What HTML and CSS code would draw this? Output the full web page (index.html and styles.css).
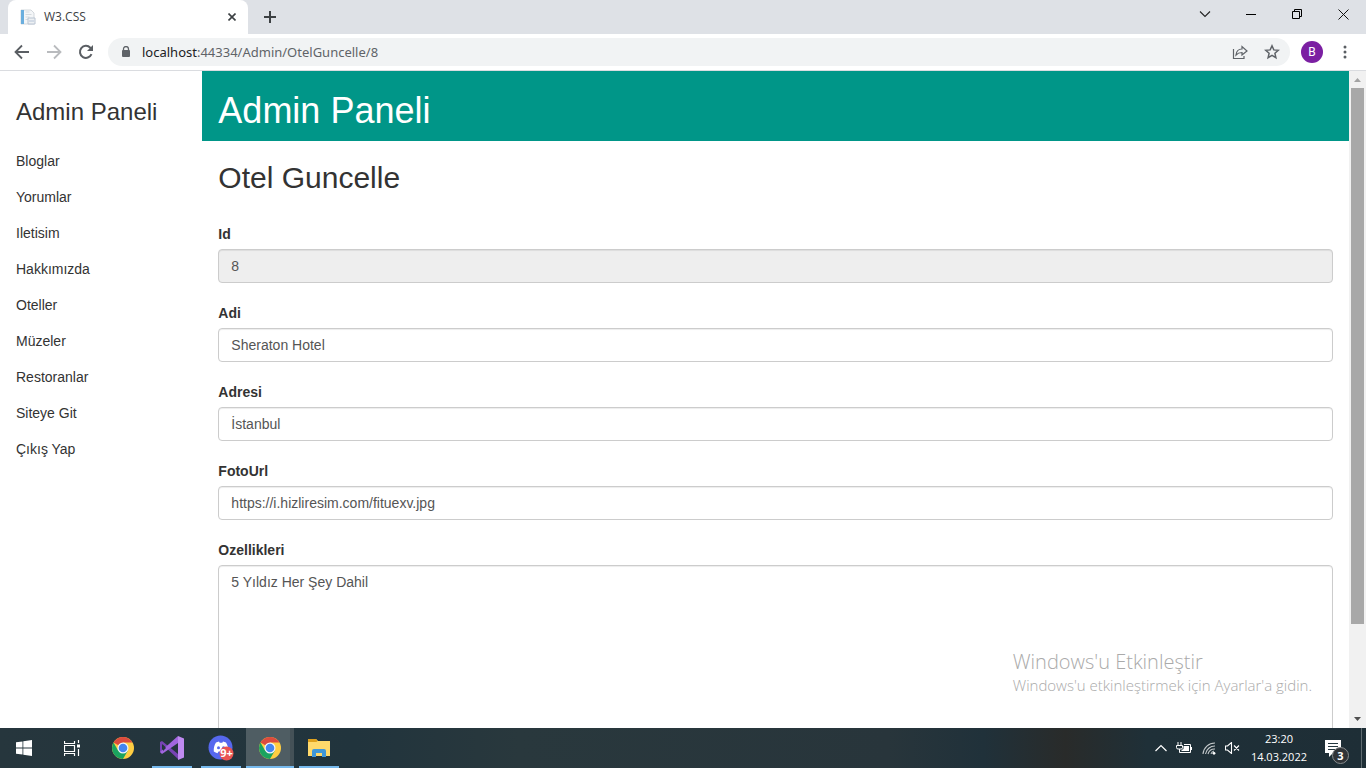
FILE: index.html
```html
<!DOCTYPE html>
<html lang="tr">
<head>
<meta charset="utf-8">
<title>W3.CSS</title>
<link rel="stylesheet" href="styles.css">
</head>
<body>
<header class="tabstrip">
  <div class="tab">
    <svg class="favicon" width="16" height="16" viewBox="0 0 16 16"><path d="M1 1h10l3 3v11H1z" fill="#f4f6f8" stroke="#d3d8dd"/><path d="M1 1h3v14H1z" fill="#6aaede"/><path d="M5.500 3h4M5.500 5.500h6M5.500 8h4M5.500 10.500h3" stroke="#d5dade"/><path d="M8 9h7v6H8z" fill="#edf0f3" stroke="#b9c4d2"/><path d="M9 12h5" stroke="#b6c4d8"/></svg>
    <span class="tab-title">W3.CSS</span>
    <button class="icon-button tab-close" aria-label="Close tab"><svg width="8" height="8" viewBox="0 0 8 8"><path d="M.5.5l7 7M7.500.5l-7 7" stroke="#3c4043" stroke-width="1.600"/></svg></button>
  </div>
  <button class="icon-button new-tab" aria-label="New tab"><svg width="12" height="12" viewBox="0 0 12 12"><path d="M6 0v12M0 6h12" stroke="#3c4043" stroke-width="2"/></svg></button>
  <div class="window-buttons">
    <button class="icon-button" aria-label="Search tabs"><svg width="12" height="12" viewBox="0 0 12 12"><path d="M1 3.500l5 5 5-5" fill="none" stroke="#222" stroke-width="1.100"/></svg></button>
    <button class="icon-button" aria-label="Minimize"><svg width="10" height="10" viewBox="0 0 10 10"><path d="M0 5.500h10" stroke="#000"/></svg></button>
    <button class="icon-button" aria-label="Restore"><svg width="10" height="10" viewBox="0 0 10 10"><path d="M.5 2.500h7v7h-7zM2.500 2.500v-2h7v7h-2" fill="none" stroke="#000"/></svg></button>
    <button class="icon-button" aria-label="Close"><svg width="11" height="11" viewBox="0 0 11 11"><path d="M.5.5l10 10M10.500.5l-10 10" stroke="#111"/></svg></button>
  </div>
</header>
<div class="toolbar">
  <div class="nav-buttons">
    <button class="icon-button" aria-label="Back"><svg width="16" height="16" viewBox="0 0 16 16"><path d="M15 8H2M8 1.500L1.500 8 8 14.500" fill="none" stroke="#5a5e63" stroke-width="1.800"/></svg></button>
    <button class="icon-button" aria-label="Forward"><svg width="16" height="16" viewBox="0 0 16 16"><path d="M1 8h13M8 1.500L14.500 8 8 14.500" fill="none" stroke="#b9bbbe" stroke-width="1.800"/></svg></button>
    <button class="icon-button" aria-label="Reload"><svg width="16" height="16" viewBox="0 0 16 16"><path d="M13.500 10.200A6 6 0 1 1 12.300 3.700L14 5.500" fill="none" stroke="#5a5e63" stroke-width="2"/><path d="M15 1v6H9z" fill="#5a5e63"/></svg></button>
  </div>
  <div class="address">
    <svg width="10" height="12" viewBox="0 0 10 12"><path d="M2.500 5V3a2.500 2.500 0 0 1 5 0v2" fill="none" stroke="#5f6368" stroke-width="1.300"/><rect x="1" y="4" width="8" height="7" rx="1" fill="#5f6368"/></svg>
    <a class="url" href="#"><span class="host">localhost</span>:44334/Admin/OtelGuncelle/8</a>
    <button class="icon-button" aria-label="Share"><svg width="16" height="16" viewBox="0 0 16 16"><path d="M1.500 5v9.500h10.500V12" fill="none" stroke="#5f6368" stroke-width="1.200"/><path d="M4 11c.4-4 2.600-6 6-6V2.500L15 7l-5 4V8.500c-3 0-4.500.8-6 2.500z" fill="none" stroke="#5f6368" stroke-width="1.200"/></svg></button>
    <button class="icon-button" aria-label="Bookmark"><svg width="16" height="16" viewBox="0 0 16 16"><path d="M8 1.800l1.800 4.100 4.500.4-3.400 3 1 4.400L8 11.400l-3.900 2.300 1-4.400-3.400-3 4.500-.4z" fill="none" stroke="#5f6368" stroke-width="1.500"/></svg></button>
  </div>
  <button class="avatar">B</button>
  <button class="icon-button" aria-label="Menu"><svg width="4" height="14" viewBox="0 0 4 14"><circle cx="2" cy="2" r="1.500" fill="#5a5e63"/><circle cx="2" cy="7" r="1.500" fill="#5a5e63"/><circle cx="2" cy="12" r="1.500" fill="#5a5e63"/></svg></button>
</div>

<div class="viewport">
  <div class="page">
    <nav class="sidebar">
      <h3 class="sidebar-title">Admin Paneli</h3>
      <a class="sidebar-link" href="#">Bloglar</a>
      <a class="sidebar-link" href="#">Yorumlar</a>
      <a class="sidebar-link" href="#">Iletisim</a>
      <a class="sidebar-link" href="#">Hakkımızda</a>
      <a class="sidebar-link" href="#">Oteller</a>
      <a class="sidebar-link" href="#">Müzeler</a>
      <a class="sidebar-link" href="#">Restoranlar</a>
      <a class="sidebar-link" href="#">Siteye Git</a>
      <a class="sidebar-link" href="#">Çıkış Yap</a>
    </nav>
    <main class="main">
      <div class="banner"><h1 class="banner-title">Admin Paneli</h1></div>
      <form class="form">
        <h2 class="form-title">Otel Guncelle</h2>
        <div class="field"><label for="id">Id</label><input class="control" id="id" value="8" readonly></div>
        <div class="field"><label for="adi">Adi</label><input class="control" id="adi" value="Sheraton Hotel"></div>
        <div class="field"><label for="adresi">Adresi</label><input class="control" id="adresi" value="İstanbul"></div>
        <div class="field"><label for="foto">FotoUrl</label><input class="control" id="foto" value="https://i.hizliresim.com/fituexv.jpg"></div>
        <div class="field"><label for="ozellik">Ozellikleri</label><textarea class="control" id="ozellik" rows="10" spellcheck="false">5 Yıldız Her Şey Dahil</textarea></div>
      </form>
    </main>
  </div>
  <div class="scrollbar">
    <svg width="17" height="17" viewBox="0 0 17 17"><path d="M5 11l3.500-4 3.500 4z" fill="#a3a3a3"/></svg>
    <div class="track"><div class="thumb"></div></div>
    <svg width="17" height="17" viewBox="0 0 17 17"><path d="M5 6l3.500 4L12 6z" fill="#505050"/></svg>
  </div>
  <div class="watermark">
    <div class="watermark-title">Windows'u Etkinleştir</div>
    <div class="watermark-text">Windows'u etkinleştirmek için Ayarlar'a gidin.</div>
  </div>
</div>

<footer class="taskbar">
  <button class="task" aria-label="Start"><svg width="16" height="16" viewBox="0 0 16 16"><path d="M0 2.300l6.500-.9v6.100H0zM7.300 1.300L16 0v7.500H7.300zM0 8.400h6.500v6.100L0 13.700zM7.300 8.400H16V16l-8.700-1.300z" fill="#fff"/></svg></button>
  <button class="task" aria-label="Task view"><svg width="16" height="16" viewBox="0 0 16 16"><path d="M.5 1v2.500h10V1M.5 5.500h10v6H.5zM.5 16v-2.500h10V16M14.500 0v3M14.500 9v7" fill="none" stroke="#fff" stroke-width="1.200"/><path d="M13 4.500h3v3h-3z" fill="#fff"/></svg></button>
  <button class="task chrome-gap" aria-label="Chrome"><svg width="24" height="24" viewBox="0 0 24 24"><circle cx="12" cy="12" r="11" fill="#ffcd42"/><path d="M12 12L2.500 6.500A11 11 0 0 1 21.500 6.500H12z" fill="#dc4b3e"/><path d="M12 12l4.800 2.800L12 23A11 11 0 0 1 2.500 6.500l4.700 8.300z" fill="#1aa35f"/><circle cx="12" cy="12" r="5.500" fill="#f3f6f9"/><circle cx="12" cy="12" r="4.300" fill="#4585f0"/></svg></button>
  <button class="task running" aria-label="Visual Studio"><svg width="24" height="24" viewBox="0 0 24 24"><path d="M0 6l2-1 16 13v5L2 8v9l-2-1z" fill="#7743b5"/><path d="M0 16l18-16v7L2 18z" fill="#a166df"/><path d="M18 0l6 2.500v19L18 24z" fill="#bf8af1"/><path d="M3 9v6l3-3z" fill="#253840"/></svg></button>
  <button class="task running" aria-label="Discord"><svg width="26" height="26" viewBox="0 0 26 26"><circle cx="12.500" cy="12.500" r="12" fill="#5668ee"/><path d="M8 7.500l3-1 .7 1.300h2.600l.7-1.300 3 1c1.800 3 2.500 6 2.200 9-1.200 1-2.500 1.500-3.700 1.700l-1-1.700h-5l-1 1.700c-1.300-.3-2.500-.8-3.700-1.700-.3-3.500.5-6.500 2.200-9z" fill="#fff"/><circle cx="10.500" cy="12.800" r="1.500" fill="#5668ee"/><circle cx="15.500" cy="12.800" r="1.500" fill="#5668ee"/><circle cx="18.500" cy="18.500" r="7" fill="#e95353"/><text class="badge-text" x="18.500" y="22" text-anchor="middle">9+</text></svg></button>
  <button class="task running active" aria-label="Chrome window"><svg width="24" height="24" viewBox="0 0 24 24"><circle cx="12" cy="12" r="11" fill="#ffcd42"/><path d="M12 12L2.500 6.500A11 11 0 0 1 21.500 6.500H12z" fill="#dc4b3e"/><path d="M12 12l4.800 2.800L12 23A11 11 0 0 1 2.500 6.500l4.700 8.300z" fill="#1aa35f"/><circle cx="12" cy="12" r="5.500" fill="#f3f6f9"/><circle cx="12" cy="12" r="4.300" fill="#4585f0"/></svg></button>
  <button class="task running" aria-label="File Explorer"><svg width="22" height="18" viewBox="0 0 22 18"><path d="M0 1q0-1 1-1h7l2 2h12v15H0z" fill="#ffd96b"/><path d="M0 1q0-1 1-1h7l1.500 2-1 1H0z" fill="#dfa11c"/><path d="M4 18v-6q0-2 2-2h10q2 0 2 2v6h-4v-4H8v4z" fill="#3f97d9"/></svg></button>
  <div class="tray">
    <svg width="12" height="8" viewBox="0 0 12 8"><path d="M.5 7L6 1.500 11.500 7" fill="none" stroke="#fff" stroke-width="1.200"/></svg>
    <svg width="17" height="12" viewBox="0 0 17 12"><path d="M2 0v3M5 0v3M.5 3.500h6v2q0 1.500-1.500 1.500H2Q.5 7 .5 5.500zM3.500 7v3.500h11v-8H8M15.500 5v3" fill="none" stroke="#fff"/><path d="M7.500 4H13v5H5.500V8l2-1z" fill="#fff"/></svg>
    <svg width="14" height="14" viewBox="0 0 14 14"><g fill="none" stroke="#c4c9cb" stroke-width="1.100"><path d="M1 13A12 12 0 0 1 13 2M3.500 13A9.500 9.500 0 0 1 13 5M6 13a7 7 0 0 1 7-5"/><path d="M9 13a4 4 0 0 1 3-3"/></g><circle cx="12" cy="12.300" r="1.400" fill="#fff"/></svg>
    <svg width="15" height="12" viewBox="0 0 15 12"><path d="M.5 4h2l4-3.500v11L2.500 8h-2zM9 3.500l5 5M14 3.500l-5 5" fill="none" stroke="#fff" stroke-width="1.100"/></svg>
    <div class="clock"><div>23:20</div><div>14.03.2022</div></div>
    <svg class="notifications" width="26" height="26" viewBox="0 0 26 26"><path d="M1 1h16v13H9l-4 4v-4H1z" fill="#fff"/><path d="M4 4.500h10M4 7.500h10M4 10.500h7" stroke="#253840"/><circle cx="16.500" cy="16.500" r="8" fill="#303438" stroke="#888c8e"/><text class="badge-text" x="16.500" y="21" text-anchor="middle">3</text></svg>
    <button class="show-desktop" aria-label="Show desktop"></button>
  </div>
</footer>
</body>
</html>
```
FILE: styles.css
```css
* { box-sizing: border-box; }
body {
  margin: 0;
  height: 100vh;
  display: flex;
  flex-direction: column;
  overflow: hidden;
  background: #fff;
  color: #333;
  font: 14px/20px "Liberation Sans", Arial, sans-serif;
}
button { border: 0; padding: 0; background: none; font: inherit; color: inherit; }
svg { display: block; flex: none; }
h1, h2, h3 { margin: 0; font-weight: 400; }
.icon-button { display: flex; align-items: center; justify-content: center; flex: none; }

.tabstrip { display: flex; flex: none; height: 34px; padding-left: 8px; background: #dee1e6; }
.tab {
  display: flex;
  align-items: center;
  gap: 8px;
  width: 240px;
  padding: 0 12px;
  background: #fff;
  border-radius: 8px 8px 0 0;
}
.tab-title { flex: 1; font: 12px/16px "Open Sans", sans-serif; color: #3c4043; }
.new-tab { width: 44px; }
.window-buttons { display: flex; margin-left: auto; height: 28px; }
.window-buttons .icon-button { width: 46px; }

.toolbar {
  display: flex;
  align-items: center;
  flex: none;
  height: 37px;
  padding: 0 19px 0 14px;
  border-bottom: 1px solid #dadce0;
}
.nav-buttons { display: flex; gap: 16px; margin-right: 14px; }
.address {
  display: flex;
  align-items: center;
  flex: 1;
  gap: 16px;
  height: 28px;
  padding: 0 10px 0 13px;
  margin-right: 11px;
  border-radius: 14px;
  background: #f1f3f4;
}
.url { flex: 1; margin-left: -5px; font: 13px/20px "Noto Sans", sans-serif; color: #5f6368; text-decoration: none; }
.host { color: #202124; }
.avatar {
  width: 22px;
  height: 22px;
  margin-right: 20px;
  border-radius: 50%;
  background: #7b1fa2;
  color: #fff;
  font: 12px/22px Roboto, sans-serif;
}

.viewport { position: relative; display: flex; flex: 1; min-height: 0; overflow: hidden; }
.page { display: flex; flex: 1; min-width: 0; overflow: hidden; }
.sidebar { width: 15%; flex: none; padding-top: 20px; }
.sidebar-title { padding: 8px 16px; margin-bottom: 10px; font-size: 24px; line-height: 26px; }
.sidebar-link { display: block; padding: 8px 16px; color: #333; text-decoration: none; }
.main { flex: 1; min-width: 0; }
.banner { padding: 20px 16px 10px; background: #009688; color: #fff; }
.banner-title { font-size: 36px; line-height: 40px; }
.form { padding: 20px 16px; }
.form-title { margin-bottom: 30px; font-size: 30px; line-height: 33px; }
.field { margin-bottom: 20px; }
.field label { display: block; margin-bottom: 5px; font-weight: 700; }
.control {
  display: block;
  width: 100%;
  height: 34px;
  padding: 6px 12px;
  border: 1px solid #ccc;
  border-radius: 4px;
  box-shadow: inset 0 1px 1px rgba(0, 0, 0, .075);
  background: #fff;
  color: #555;
  font: inherit;
}
.control[readonly] { background: #eee; }
textarea.control { height: auto; resize: none; }

.scrollbar { display: flex; flex-direction: column; flex: none; width: 17px; background: #f1f1f1; }
.track { flex: 1; padding: 0 2px; }
.thumb { height: 86%; background: #a8a8a8; }
.watermark { position: absolute; right: 54px; bottom: 33px; font-family: "Open Sans", sans-serif; font-weight: 300; color: #aaa; }
.watermark-title { font-size: 20px; line-height: 26px; }
.watermark-text { font-size: 15px; line-height: 20px; }

.taskbar {
  display: flex;
  flex: none;
  height: 40px;
  background: linear-gradient(90deg, #26363d 0, #21343d 26%, #29383d 38%, #28353b 65%, #20313a 72%, #292b2a 78%, #1f3038 84%, #1e2e36 100%);
  color: #fff;
}
.task { display: flex; align-items: center; justify-content: center; width: 40px; margin-right: 9px; }
.task:first-child { width: 48px; margin-right: 4px; }
.chrome-gap { margin-left: 2px; }
.running { border-bottom: 2px solid #76b9ed; padding-top: 2px; }
.active { width: 48px; margin-left: -4px; margin-right: 5px; background: #4f5d63; box-shadow: inset -4px 0 #445157; }
.tray { display: flex; align-items: center; margin-left: auto; gap: 9px; }
.clock { margin: 0 8px 0 2px; font: 11px/18px "Open Sans", sans-serif; text-align: center; }
.notifications { margin-top: 8px; }
.show-desktop { width: 5px; margin-left: 2px; align-self: stretch; border-left: 1px solid #5f6b70; }
.badge-text { fill: #fff; font: 700 11px "Open Sans", sans-serif; }
```
